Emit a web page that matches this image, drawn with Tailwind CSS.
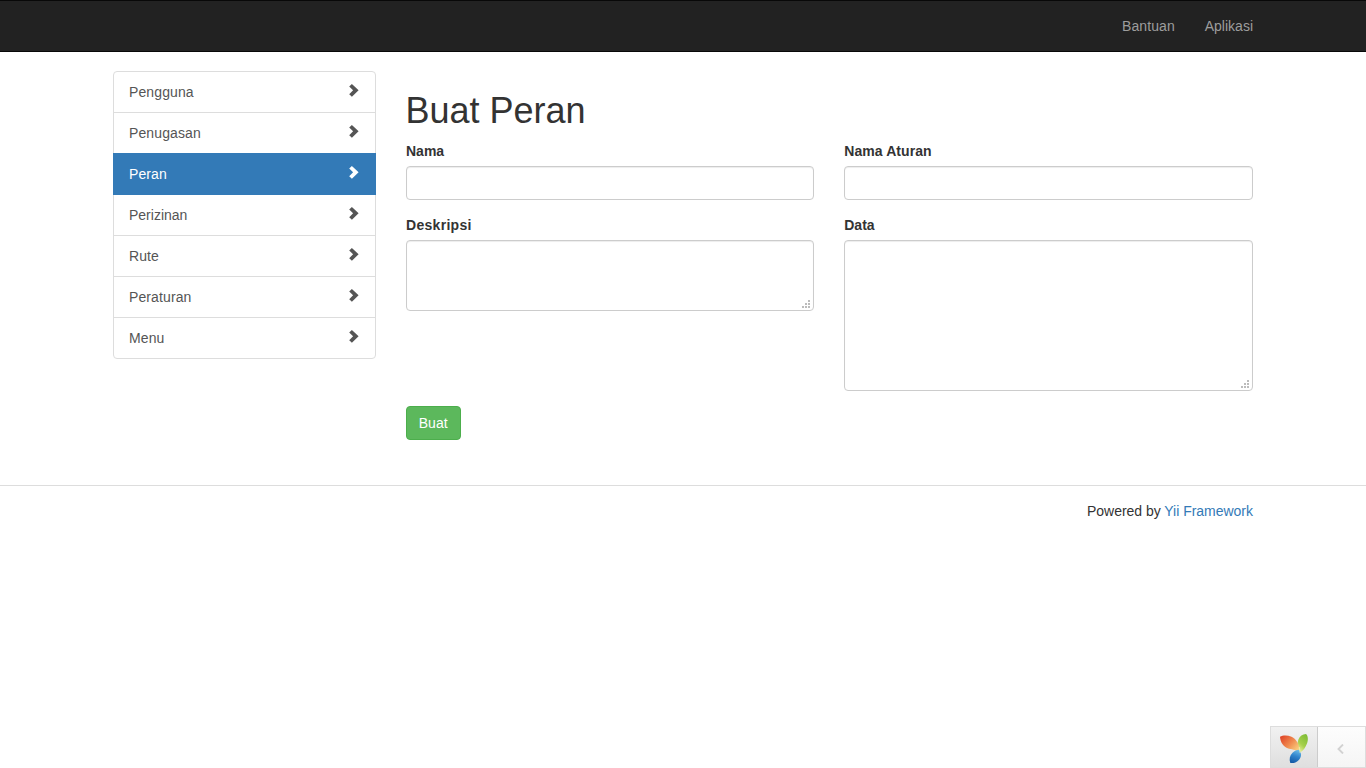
<!DOCTYPE html>
<html lang="id">
<head>
<meta charset="utf-8">
<title>Buat Peran</title>
<script src="https://cdn.jsdelivr.net/npm/@tailwindcss/browser@4"></script>
</head>
<body class="h-screen overflow-hidden bg-white font-['Liberation_Sans',Arial,sans-serif] text-[14px] leading-[20px] text-[#333]">
<svg class="hidden">
  <symbol id="chev" viewBox="0 0 10 13"><path d="M0.2 2.600 2.900 0 9.600 6.300 2.900 12.800 0.200 10.200 4.100 6.300Z" fill="currentColor"/></symbol>
  <symbol id="grip" viewBox="0 0 8 8"><path d="M6 0h2v2H6zM3 3h2v2H3zM6 3h2v2H6zM0 6h2v2H0zM3 6h2v2H3zM6 6h2v2H6z" fill="#bcbcbc"/></symbol>
</svg>
<div class="flex h-full flex-col">
  <nav class="h-[52px] shrink-0 border-y border-[#080808] bg-[#222]">
    <div class="mx-auto flex w-[1140px] justify-end gap-[30px] pt-[15px] text-[#9d9d9d]">
      <a class="tracking-[0.07px]">Bantuan</a><a>Aplikasi</a>
    </div>
  </nav>
  <main class="mx-auto flex h-[433px] w-[1140px] shrink-0 gap-[30px] pt-[19px]">
    <div class="flex h-[288px] w-[262.5px] shrink-0 flex-col tracking-[0.11px] text-[#555]">
      <a class="flex h-[42px] shrink-0 justify-between rounded-t-[4px] border border-[#ddd] px-[15px] pt-[10px]">Pengguna<svg class="mt-[2px] mr-px h-[13px] w-[10px]"><use href="#chev"/></svg></a>
      <a class="-mt-px flex h-[42px] shrink-0 justify-between border border-[#ddd] px-[15px] pt-[10px]">Penugasan<svg class="mt-[2px] mr-px h-[13px] w-[10px]"><use href="#chev"/></svg></a>
      <a class="relative z-10 -mt-px flex h-[42px] shrink-0 justify-between border border-[#337ab7] bg-[#337ab7] px-[15px] pt-[10px] text-white">Peran<svg class="mt-[2px] mr-px h-[13px] w-[10px]"><use href="#chev"/></svg></a>
      <a class="-mt-px flex h-[42px] shrink-0 justify-between border border-[#ddd] px-[15px] pt-[10px]"><span class="tracking-normal">Perizinan</span><svg class="mt-[2px] mr-px h-[13px] w-[10px]"><use href="#chev"/></svg></a>
      <a class="-mt-px flex h-[42px] shrink-0 justify-between border border-[#ddd] px-[15px] pt-[10px]">Rute<svg class="mt-[2px] mr-px h-[13px] w-[10px]"><use href="#chev"/></svg></a>
      <a class="-mt-px flex h-[42px] shrink-0 justify-between border border-[#ddd] px-[15px] pt-[10px]">Peraturan<svg class="mt-[2px] mr-px h-[13px] w-[10px]"><use href="#chev"/></svg></a>
      <a class="-mt-px flex h-[42px] shrink-0 justify-between rounded-b-[4px] border border-[#ddd] px-[15px] pt-[10px]">Menu<svg class="mt-[2px] mr-px h-[13px] w-[10px]"><use href="#chev"/></svg></a>
    </div>
    <div class="flex-1 pt-[20px]">
      <h1 class="mb-[10px] text-[36px] leading-[39.6px] font-medium">Buat Peran</h1>
      <div class="grid grid-cols-2 gap-[30px]">
        <div>
          <label class="mb-[5px] block pl-[0.5px] font-bold">Nama</label>
          <input class="mb-[15px] block h-[34px] w-full rounded-[4px] border border-[#ccc] px-3 shadow-[inset_0_1px_1px_rgba(0,0,0,0.075)]">
          <label class="mb-[5px] block pl-[0.5px] font-bold tracking-[0.3px]">Deskripsi</label>
          <div class="flex h-[71px] items-end justify-end rounded-[4px] border border-[#ccc] pr-[3px] pb-[2px] shadow-[inset_0_1px_1px_rgba(0,0,0,0.075)]"><svg class="h-2 w-2" shape-rendering="crispEdges"><use href="#grip"/></svg></div>
        </div>
        <div>
          <label class="mb-[5px] block font-bold tracking-[0.08px]">Nama Aturan</label>
          <input class="mb-[15px] block h-[34px] w-full rounded-[4px] border border-[#ccc] px-3 shadow-[inset_0_1px_1px_rgba(0,0,0,0.075)]">
          <label class="mb-[5px] block font-bold">Data</label>
          <div class="flex h-[151px] items-end justify-end rounded-[4px] border border-[#ccc] pr-[3px] pb-[2px] shadow-[inset_0_1px_1px_rgba(0,0,0,0.075)]"><svg class="h-2 w-2" shape-rendering="crispEdges"><use href="#grip"/></svg></div>
        </div>
      </div>
      <button class="mt-[15px] block h-[34px] w-[55.5px] rounded-[4px] border border-[#4cae4c] bg-[#5cb85c] text-center tracking-[0.1px] text-white">Buat</button>
    </div>
  </main>
  <footer class="shrink-0 border-t border-[#ddd]">
    <p class="mx-auto w-[1140px] pt-[15px] text-right tracking-[-0.02px]">Powered by <a class="text-[#337ab7]">Yii Framework</a></p>
  </footer>
  <div class="mt-auto flex h-[42px] w-[96px] shrink-0 self-end border border-[#ddd] bg-linear-to-b from-[#fdfdfd] to-[#f5f5f5]">
    <div class="flex w-[47px] shrink-0 border-r border-[#ccc] bg-linear-to-b from-[#f1f1f1] to-[#dfdfdf] pt-[7px] pl-[9px]">
      <svg class="h-[30px] w-[29px]" viewBox="0 0 29 30">
        <defs>
          <linearGradient id="o" x1="0" y1="0.1" x2="1" y2="0.9"><stop offset="0" stop-color="#df4327"/><stop offset=".5" stop-color="#f08c50"/><stop offset="1" stop-color="#fbe08a"/></linearGradient>
          <linearGradient id="g" x1="0.8" y1="0" x2="0.3" y2="1"><stop offset="0" stop-color="#7dbb35"/><stop offset=".6" stop-color="#a6d04b"/><stop offset="1" stop-color="#eff0a0"/></linearGradient>
          <linearGradient id="b" x1="0.7" y1="0" x2="0.4" y2="1"><stop offset="0" stop-color="#6bbbe8"/><stop offset=".5" stop-color="#2f83cb"/><stop offset="1" stop-color="#155ba7"/></linearGradient>
        </defs>
        <path d="M26 0C28.200 2 28.400 6 27 9.500C25.600 13.500 23 16.800 20 18.800C17.500 14.500 16.800 9.500 18.400 5.500C19.700 2.200 22.500 .2 26 0Z" fill="url(#g)"/>
        <path d="M0 2.800C3 1 7.500 1 11.500 2.800C16.500 5.200 19.800 10.500 19.800 18.600C17 15.800 13 15.800 9 14.800C3.500 13.300 .4 8.500 0 2.800Z" fill="url(#o)"/>
        <path d="M18.900 15.800C21.600 18.500 21.800 22.300 19.300 25.500C17.200 28.300 13.500 29.500 10.300 29C9 25.500 9.700 21.300 12.500 18.700C14.500 16.800 16.800 15.900 18.900 15.800Z" fill="url(#b)"/>
        <path d="M20.200 19Q19.500 16.500 19.300 13" fill="none" stroke="#f3f3b5" stroke-width=".7"/>
      </svg>
    </div>
    <div class="flex flex-1 items-center justify-center pt-[4px]">
      <svg class="mr-[3px] h-[10px] w-[7px]" viewBox="0 0 7 10"><path d="M6 .5 1.500 5 6 9.500" fill="none" stroke="#d2d2d2" stroke-width="1.900"/></svg>
    </div>
  </div>
</div>
</body>
</html>
